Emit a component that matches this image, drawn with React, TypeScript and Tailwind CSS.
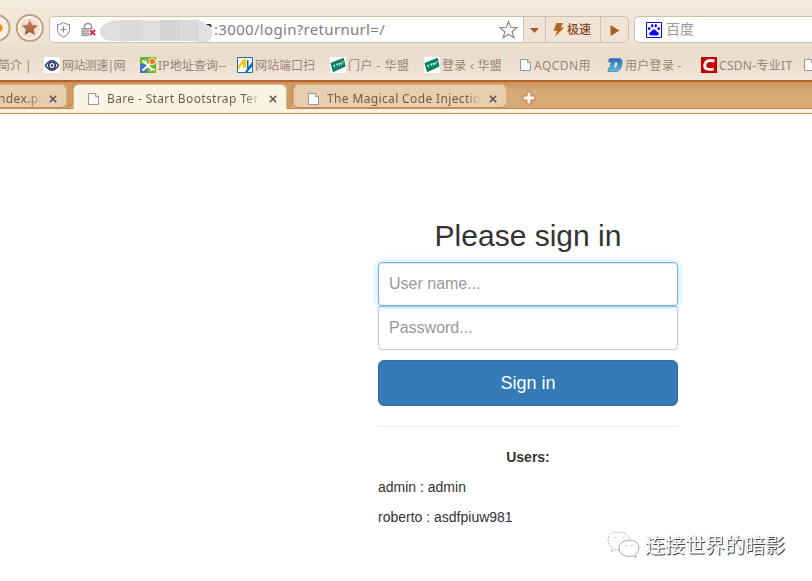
import React from "react";

const ui = "font-['Noto_Sans','Noto_Sans_CJK_SC',sans-serif]";
const page = "font-['Liberation_Sans',Arial,sans-serif]";

function FileIcon() {
  return (
    <svg width="12" height="14" viewBox="0 0 12 14" className="block shrink-0">
      <path d="M.5 1.5h7l3 3v8H.5z" fill="#fafafa" stroke="#9a9692" />
      <path d="M7.5 1.5v3h3" fill="#e4e4e4" stroke="#9a9692" />
    </svg>
  );
}

function EyeIcon() {
  return (
    <svg width="16" height="16" viewBox="0 0 16 16" className="block shrink-0">
      <path d="M0 0h16v16H0z" fill="#fff" />
      <path d="M1.5 8.5Q8 -1 14.5 8.5 8 18 1.500 8.500z" fill="#fff" stroke="#3a4470" strokeWidth="1.5" />
      <circle cx="8" cy="8.5" r="3.3" fill="#fff" stroke="#2c3564" strokeWidth="1.6" />
      <circle cx="8" cy="8.5" r="1.3" fill="#2c3564" />
    </svg>
  );
}

function IpIcon() {
  return (
    <svg width="16" height="16" viewBox="0 0 16 16" className="block shrink-0">
      <path d="M0 0h16v16H0z" fill="#72b52a" />
      <path d="M0 7h7v9H0z" fill="#4474bd" />
      <path d="M2.500 13.500L10 7M5 5l7 8" stroke="#fff" strokeWidth="2.200" />
      <path d="M2.500 3.500l2 2.500L6 3.500M11 14l1.500-2 2.500 1" stroke="#fff" strokeWidth="1.600" fill="none" />
      <circle cx="12.2" cy="4.3" r="3.300" fill="#f07818" stroke="#fff" strokeWidth=".9" />
    </svg>
  );
}

function PortIcon() {
  return (
    <svg width="16" height="16" viewBox="0 0 16 16" className="block shrink-0">
      <path d="M.5.5h15v15H.5z" fill="#fff" stroke="#1470b8" />
      <path d="M1 9L6.500 2H9v9H6V6.500L1 13z" fill="#fdc70c" />
      <path d="M15 5v4.500L10.500 15H8l2-3V3h1.500v7z" fill="#0d6ab5" />
    </svg>
  );
}

function StampIcon() {
  return (
    <svg width="16" height="16" viewBox="0 0 16 16" className="block shrink-0">
      <path d="M0 0h16v16H0z" fill="#fff" />
      <path d="M.5 6L13.500.8l1 3.200 1 5.500L3 15.200 2 11.500z" fill="#078064" />
      <path d="M3 8.700l2.300-.9M4.200 8.300l.6 2.200M6 7.500l2.200-.9M7.200 7l.6 2.200M9.500 8.500L9 6.200l1.300 1.100.6-1.700.7 2M12 5l1.500-.6M12.300 6.200l1.200-.5" stroke="#d8eee6" strokeWidth=".9" fill="none" />
    </svg>
  );
}

function DIcon() {
  return (
    <svg width="16" height="16" viewBox="0 0 16 16" className="block shrink-0">
      <defs>
        <linearGradient id="dg" x1="0" y1="0" x2="0" y2="1">
          <stop offset="0" stopColor="#2864c0" />
          <stop offset="1" stopColor="#48c8f4" />
        </linearGradient>
      </defs>
      <path fillRule="evenodd" d="M2.200 1.500H12q4 0 3 5.500-1.200 7.500-6 7.500H.8l.9-3.500h1.100L4.200 5H1.500zM7.700 5L6.300 11.200H8.500q1.500 0 2.200-3.700Q11.300 5 9.500 5z" fill="url(#dg)" stroke="#66809b" strokeWidth=".8" />
    </svg>
  );
}

function CsdnIcon() {
  return (
    <svg width="16" height="16" viewBox="0 0 16 16" className="block shrink-0">
      <path d="M0 0h16v16H0z" fill="#c90000" />
      <path d="M13.500 4Q5 2 3.800 7.600q-.9 6 8.700 4.500" fill="none" stroke="#fff" strokeWidth="2.900" />
    </svg>
  );
}

function Bookmark({ icon, text, box }: { icon?: React.ReactNode; text: string; box: string }) {
  return (
    <div className={`flex shrink-0 items-center gap-[2px] ${box}`}>
      {icon}
      <span className="whitespace-nowrap pt-[2px]">{text}</span>
    </div>
  );
}

function CloseIcon() {
  return (
    <svg width="8" height="8" viewBox="0 0 8 8" className="block shrink-0">
      <path d="M.800 .8l6.400 6.400M7.200 .8L.8 7.200" stroke="#5c5048" strokeWidth="1.500" />
    </svg>
  );
}

function Toolbar() {
  return (
    <div className="flex h-[53px] items-start">
      <svg width="49" height="50" viewBox="0 0 49 50" className="block shrink-0">
        <defs>
          <linearGradient id="st" x1="0" y1="0" x2="0" y2="1">
            <stop offset="0" stopColor="#cb8c68" />
            <stop offset="1" stopColor="#9d5635" />
          </linearGradient>
        </defs>
        <circle cx="-3.500" cy="28" r="13" fill="#f7eee3" stroke="#c39f84" strokeWidth="2" />
        <circle cx="-2" cy="28" r="4.500" fill="#ff8c00" />
        <circle cx="29.800" cy="28" r="13" fill="#eee0d2" stroke="#c39f84" strokeWidth="2" />
        <circle cx="29.800" cy="28" r="11" fill="none" stroke="#fbf6ee" strokeWidth="1.500" />
        <path d="M29.800 19.500l2.400 5.300 5.800.6-4.300 3.900 1.200 5.700-5.100-2.900-5.100 2.900 1.200-5.700-4.300-3.900 5.800-.6z" fill="url(#st)" />
      </svg>
      <div className="mt-4 flex h-[27px] w-[580px] shrink-0 overflow-hidden rounded-[5px] border border-[#d0bfaa] bg-[#efe4d6]">
        <div className="flex w-[473px] shrink-0 items-center bg-white">
          <svg width="164" height="25" viewBox="50 17 164 25" className="block shrink-0">
            <path d="M63.500 22.500q2.500 2 6 2v5q0 5-6 7.500-6-2.500-6-7.500v-5q3.500 0 6-2zM60.500 29.500h6M63.500 26.500v6" fill="none" stroke="#858585" />
            <path d="M84.500 29v-2.500q0-3 3.500-3t3.500 3V29" fill="none" stroke="#999" strokeWidth="1.500" />
            <path d="M82 28.500h11v7H82z" fill="#c4c4c4" stroke="#939393" />
            <path d="M83 31h9M83 33.500h9" stroke="#a5a5a5" />
            <path d="M89 29h7v7h-7z" fill="#fff" />
            <path d="M90 30l5 5M95 30l-5 5" stroke="#e8202b" strokeWidth="1.800" />
            <path d="M206 24h3.500q2 0 2 3l-1.500 2z" fill="#222" />
            <path d="M108 22q4-2 11-2h72q10-1 16 5 5 1 5 7v4q-2 5-5 6h-9q-3-1-5-1h-68q-2 1-8 0-17 1-17-10 0-5 8-9z" fill="#dfdedd" />
            <path d="M120 20h20v21h-20zM180 20h18v21h-18z" fill="#dad9d8" />
            <path d="M160 20h20v20h-20z" fill="#d3d4d6" />
            <path d="M198 21q5 1 9 4 5 1 5 7v4q-2 5-5 6h-9z" fill="#e0e1e6" />
          </svg>
          <span className="w-[285px] whitespace-nowrap text-[15px] tracking-[0.32px] text-[#808080]">:3000/login?returnurl=/</span>
          <svg width="20" height="20" viewBox="0 0 20 20" className="block shrink-0">
            <path d="M9.500 1.500l2.200 5.800 6.300.400-4.900 4 1.700 6-5.300-3.400-5.300 3.400 1.700-6L1 7.700l6.300-.400z" fill="#fff" stroke="#868686" strokeWidth="1.200" />
          </svg>
        </div>
        <div className="flex w-[22px] shrink-0 items-center justify-center border-l border-[#d0bfaa]">
          <svg width="9" height="5" viewBox="0 0 9 5" className="mt-[2px]"><path d="M0 0h9L4.500 5z" fill="#a4572a" /></svg>
        </div>
        <div className="flex w-[55px] shrink-0 items-center border-l border-[#d0bfaa] pl-[7px]">
          <svg width="12" height="14" viewBox="0 0 12 14" className="block shrink-0">
            <path d="M3.500 0H10L8 4.500h3.500L2 13.500l2.200-5.700H.5z" fill="#b16827" />
          </svg>
          <span className="ml-[2px] whitespace-nowrap text-[12px] font-medium text-[#88431b]">极速</span>
        </div>
        <div className="flex flex-1 items-center justify-center border-l border-[#d0bfaa]">
          <svg width="10" height="11" viewBox="0 0 10 11" className="mt-px"><path d="M.5 0L9.500 5.500.5 11z" fill="#ac6026" /></svg>
        </div>
      </div>
      <div className="ml-[5px] mt-4 flex h-[27px] w-[190px] shrink-0 items-center gap-1 rounded-l-[5px] border border-[#d0bfaa] bg-white pl-[11px]">
        <svg width="16" height="16" viewBox="0 0 16 16" className="block shrink-0">
          <path d="M.5.5h15v15H.5z" fill="#fff" stroke="#0808f0" />
          <g fill="#0808f0">
            <ellipse cx="3.200" cy="6.500" rx="1.300" ry="1.600" />
            <ellipse cx="6.200" cy="3.700" rx="1.200" ry="1.700" />
            <ellipse cx="9.800" cy="3.700" rx="1.200" ry="1.700" />
            <ellipse cx="12.700" cy="6.500" rx="1.300" ry="1.600" />
            <path d="M8 7.200q1.300 0 2.300 1.800 2.700 1.500 2.700 3-.5 2-5 1.200-4.500.8-5-1.200 0-1.500 2.700-3Q6.700 7.200 8 7.200z" />
          </g>
        </svg>
        <span className="-mt-[2px] text-[14px] text-[#999]">百度</span>
      </div>
    </div>
  );
}

function Bookmarks() {
  return (
    <div className="flex h-[27px] items-center overflow-hidden pb-[3px] text-[12px] text-[#9a8473]">
      <div className="-ml-[2px] w-[46px] shrink-0 whitespace-nowrap pt-[2px]">简介 |</div>
      <Bookmark icon={<EyeIcon />} text="网站测速|网" box="w-[96px] tracking-[-0.6px]" />
      <Bookmark icon={<IpIcon />} text="IP地址查询--" box="w-[97px] tracking-[0.15px]" />
      <Bookmark icon={<PortIcon />} text="网站端口扫" box="w-[93px]" />
      <Bookmark icon={<StampIcon />} text="门户 - 华盟" box="w-[94px] tracking-[0.5px]" />
      <Bookmark icon={<StampIcon />} text="登录 ‹ 华盟" box="w-[96px] tracking-[0.3px]" />
      <Bookmark icon={<FileIcon />} text="AQCDN用" box="w-[87px] tracking-[0.45px]" />
      <Bookmark icon={<DIcon />} text="用户登录 -" box="w-[94px] tracking-[0.3px]" />
      <Bookmark icon={<CsdnIcon />} text="CSDN-专业IT" box="w-[103px] tracking-[0.3px]" />
      <FileIcon />
    </div>
  );
}

// The darker scooped notch between two neighbouring tabs.
function TabSeam() {
  return (
    <svg width="8" height="24" viewBox="0 0 8 24" className="block shrink-0">
      <path d="M0 0h8Q6 1 6 5v10q0 7-4 8.500H0z" fill="#cf9b66" />
      <path d="M8 .5Q6 1 6 5v10q0 7-6 8.500" fill="none" stroke="#c5824e" />
    </svg>
  );
}

function Tabs() {
  return (
    <div className="h-[34px] border-t-2 border-[#b5632f] bg-gradient-to-b from-[#cb935c] via-[#d5aa77] via-30% to-[#d5aa77]">
      <div className="flex h-[27px] items-start border-b border-[#c88752] pt-[2px] text-[12px] tracking-[0.36px] text-[#735642]">
        <div className="flex h-6 w-[67px] shrink-0 items-center rounded-r-[6px] border border-l-0 border-[#dba87c] border-b-[#c98b5b] bg-[#e6ceaf] pt-[5px]">
          <span className="-ml-[2px] w-[51px] shrink-0 overflow-hidden whitespace-nowrap bg-gradient-to-r from-[#735642] from-60% to-[#e6ceaf] to-85% bg-clip-text text-transparent">ndex.pl</span>
          <CloseIcon />
        </div>
        <TabSeam />
        <div className="-ml-[2px] flex h-[25px] w-[214px] shrink-0 items-center rounded-t-[6px] border border-b-0 border-[#e0b88d] bg-[#faf4e3] pl-[14px] pt-1">
          <FileIcon />
          <span className="ml-[7px] w-[162px] shrink-0 overflow-hidden whitespace-nowrap bg-gradient-to-r from-[#735642] from-85% to-[#faf4e3] to-95% bg-clip-text text-transparent">Bare - Start Bootstrap Ter</span>
          <CloseIcon />
        </div>
        <TabSeam />
        <div className="-ml-[2px] flex h-6 w-[214px] shrink-0 items-center rounded-[6px] border border-[#dba87c] border-b-[#c98b5b] bg-[#e6ceaf] pl-[14px] pt-[5px]">
          <FileIcon />
          <span className="ml-[7px] w-[162px] shrink-0 overflow-hidden whitespace-nowrap bg-gradient-to-r from-[#735642] from-85% to-[#e6ceaf] to-95% bg-clip-text text-transparent">The Magical Code Injectio</span>
          <CloseIcon />
        </div>
        <svg width="14" height="14" viewBox="0 0 14 14" className="ml-[15px] mt-[7px] block shrink-0">
          <path d="M5 1h4v4h4v4H9v4H5V9H1V5h4z" fill="#fff5e6" stroke="#bd7d49" />
        </svg>
      </div>
      <div className="h-[5px] border-b border-[#c98d52] bg-[#fbf3de]" />
    </div>
  );
}

function Watermark() {
  return (
    <div className="absolute left-[607px] top-[530px] flex items-center gap-[5px]">
      <svg width="33" height="29" viewBox="0 0 33 29" className="block" fill="#fff" stroke="#999" strokeWidth=".7" strokeDasharray="2 1">
        <path d="M12 20q-2 0-4-.7L4.500 22l.8-4Q1 15 1 10.500 1 2 12 2q9 .500 10.500 7" />
        <path strokeDasharray="none" stroke="#888" d="M22 10q10 .500 10 8 0 4-3.500 6.500l.5 3-3-1.800q-2 .800-4 .800-10-.500-10-8.500 0-7 10-8z" />
        <path d="M7 8q1-1.500 2 0M15 8q1-1.500 2 0M18 16q1-1 2 0M24 16q1-1 2 0" />
      </svg>
      <span className="whitespace-nowrap font-['Noto_Sans_CJK_SC',sans-serif] text-[20px] leading-7 text-white [text-shadow:1px_1px_0_#444,0_0_1px_#aaa]">连接世界的暗影</span>
    </div>
  );
}

export default function App() {
  return (
    <div className="relative h-[581px] w-[812px] overflow-hidden bg-white">
      <header className={`${ui} bg-[#efe4d5]`}>
        <div className="bg-[linear-gradient(to_bottom,#f3eadb_0%,#efe5d5_50%,#e7dccc_67%,#ecdfcf_80%,#f2e6d8_100%)]">
          <Toolbar />
          <Bookmarks />
        </div>
        <Tabs />
      </header>
      <main className={`${page} ml-[378px] w-[300px] pt-[105px] text-[14px] leading-5 text-[#333]`}>
        <h2 className="h-[43px] text-center text-[30px] leading-[33px]">Please sign in</h2>
        <input
          className="relative z-10 block h-11 w-full rounded-[4px] border border-[#66afe9] bg-white px-[10px] text-[16px] shadow-[inset_0_1px_1px_rgba(0,0,0,.075),0_0_8px_rgba(102,175,233,.45)] outline-none placeholder:text-[#999]"
          placeholder="User name..."
        />
        <input
          className="block h-11 w-full rounded-b-[4px] border border-[#ccc] bg-white px-[10px] text-[16px] shadow-[inset_0_1px_1px_rgba(0,0,0,.075)] outline-none placeholder:text-[#999]"
          placeholder="Password..."
        />
        <button className="mt-[10px] block h-[46px] w-full rounded-[6px] border border-[#2e6da4] bg-[#337ab7] text-[18px] text-white">Sign in</button>
        <hr className="my-5 border-[#eee]" />
        <p className="mb-[10px] text-center font-bold">Users:</p>
        <p className="mb-[10px]">admin : admin</p>
        <p>roberto : asdfpiuw981</p>
      </main>
      <Watermark />
    </div>
  );
}
